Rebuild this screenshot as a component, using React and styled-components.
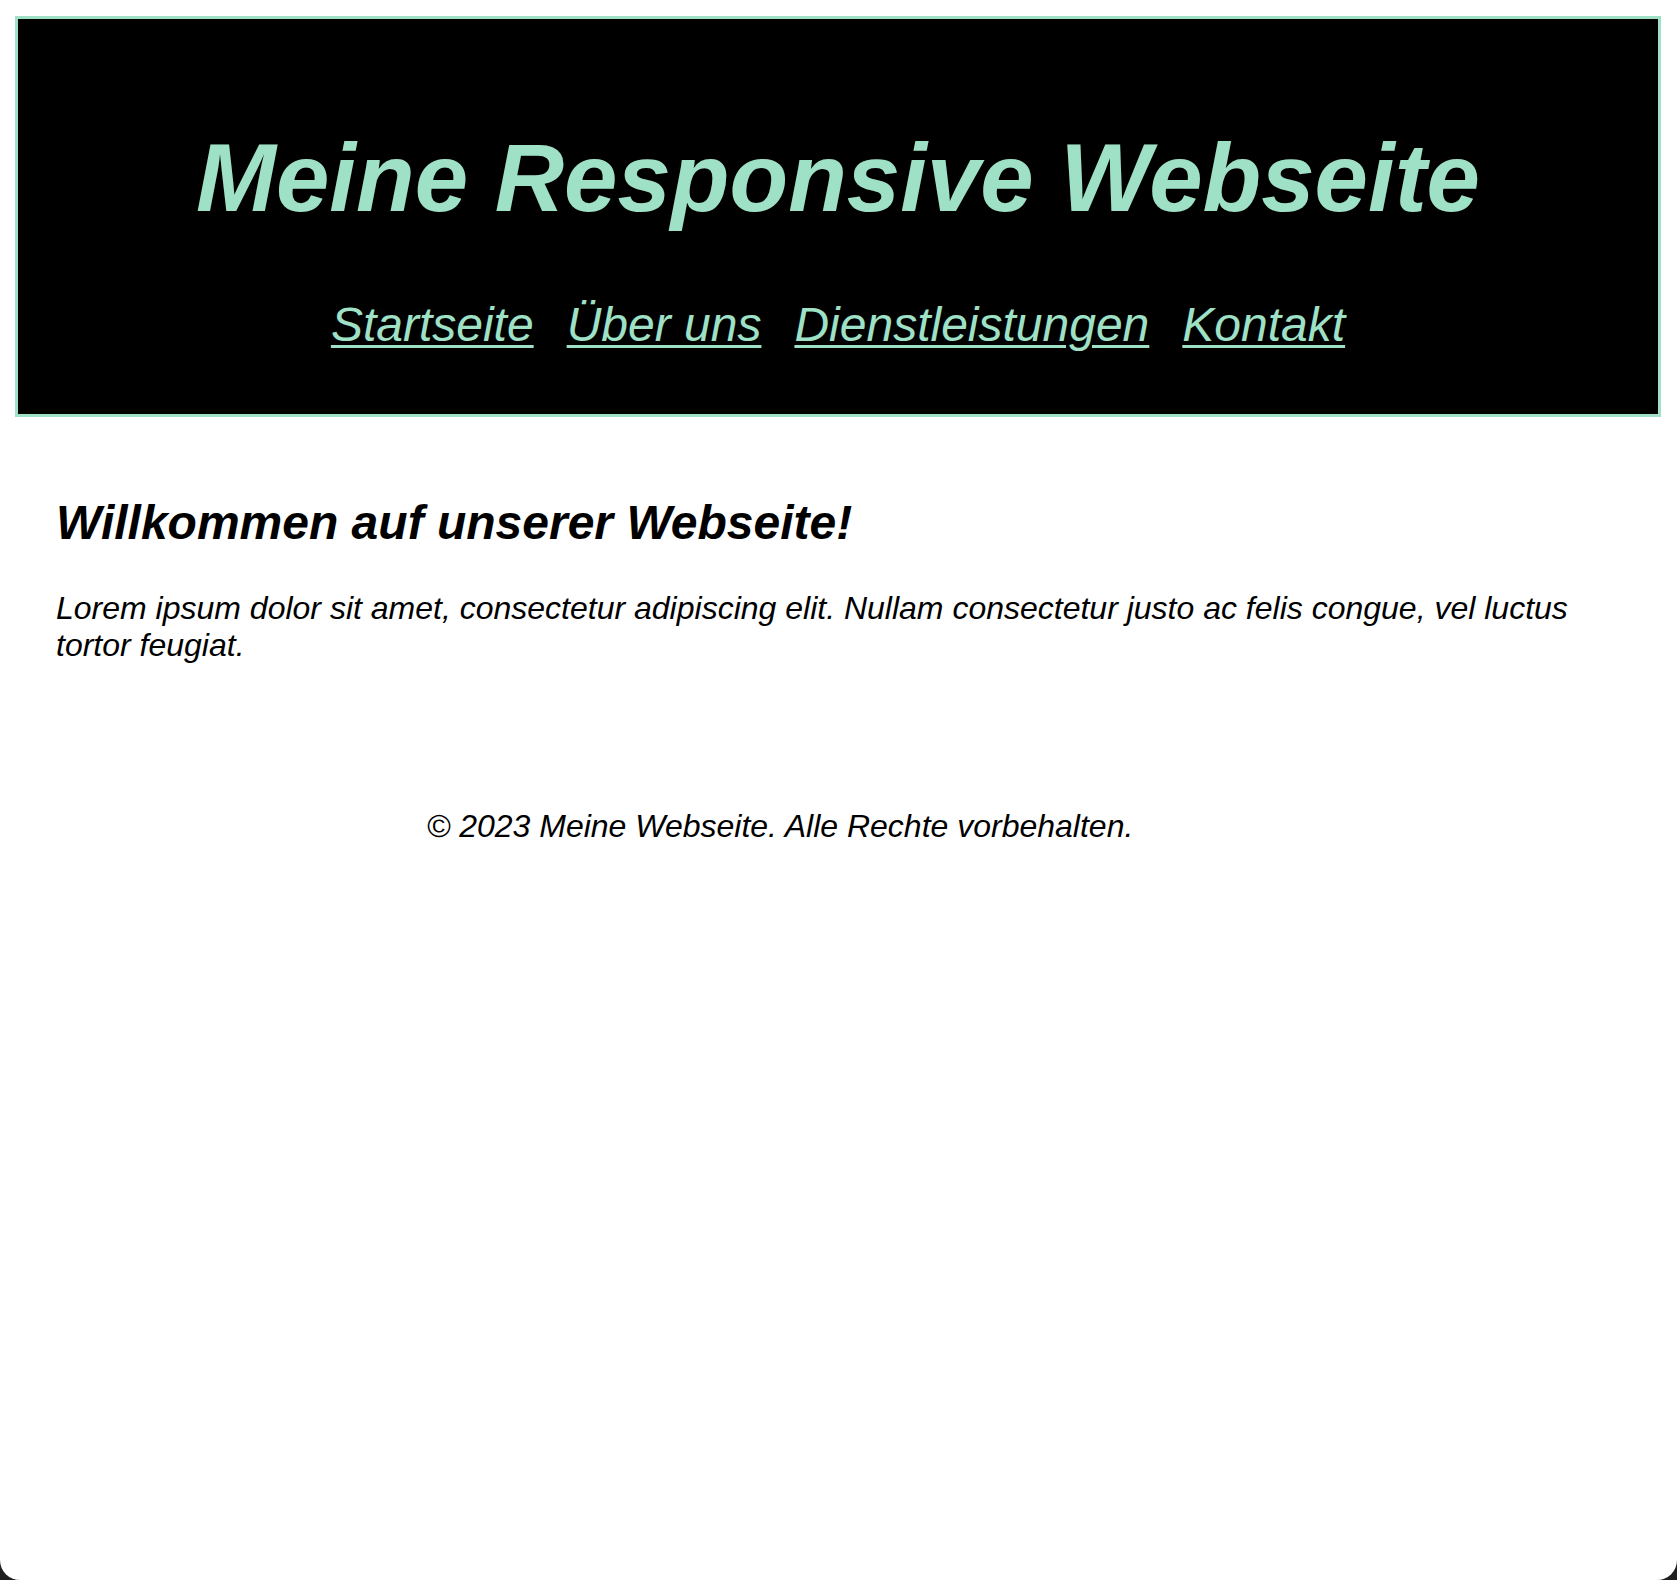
import styled, { createGlobalStyle } from "styled-components";

const GlobalStyle = createGlobalStyle`
  html {
    background: #1f1f1f;
  }
  body {
    margin: 0;
    font-family: "Liberation Sans", Arial, sans-serif;
    font-style: italic;
    color: #000;
  }
`;

const mint = "#9fe1c6";

const Page = styled.div`
  min-height: 1580px;
  box-sizing: border-box;
  padding: 16px 16px 0 15px;
  background: #fff;
  border-radius: 0 0 20px 20px;
`;

const Header = styled.header`
  background: #000;
  color: ${mint};
  border: 3px solid ${mint};
  padding: 40px;
  text-align: center;
`;

const Title = styled.h1`
  margin: 64px 0;
  font-size: 96px;
  font-weight: bold;
  line-height: normal;
`;

const Nav = styled.nav`
  display: flex;
  justify-content: center;
  gap: 33px;
  margin-bottom: 22px;
`;

const NavLink = styled.a`
  color: ${mint};
  font-size: 48px;
  text-decoration: underline;
  text-decoration-thickness: 3px;
  text-underline-offset: 4px;
`;

const Main = styled.main`
  padding: 38px 40px 40px 41px;
`;

const Heading = styled.h2`
  margin: 40px 0;
  font-size: 48px;
  font-weight: bold;
`;

const Text = styled.p`
  margin: 32px 0;
  font-size: 32px;
`;

const Footer = styled.footer`
  padding: 40px;
  margin-right: 116px;
  text-align: center;
  font-size: 32px;
`;

const FooterText = styled.p`
  margin: 32px 0;
`;

const links = ["Startseite", "Über uns", "Dienstleistungen", "Kontakt"];

const App = () => {
  return (
    <Page>
      <GlobalStyle />
      <Header>
        <Title>Meine Responsive Webseite</Title>
        <Nav>
          {links.map((l) => (
            <NavLink key={l} href="#">{l}</NavLink>
          ))}
        </Nav>
      </Header>
      <Main>
        <Heading>Willkommen auf unserer Webseite!</Heading>
        <Text>
          Lorem ipsum dolor sit amet, consectetur adipiscing elit. Nullam
          consectetur justo ac felis congue, vel luctus tortor feugiat.
        </Text>
      </Main>
      <Footer>
        <FooterText>© 2023 Meine Webseite. Alle Rechte vorbehalten.</FooterText>
      </Footer>
    </Page>
  );
};

export default App;
